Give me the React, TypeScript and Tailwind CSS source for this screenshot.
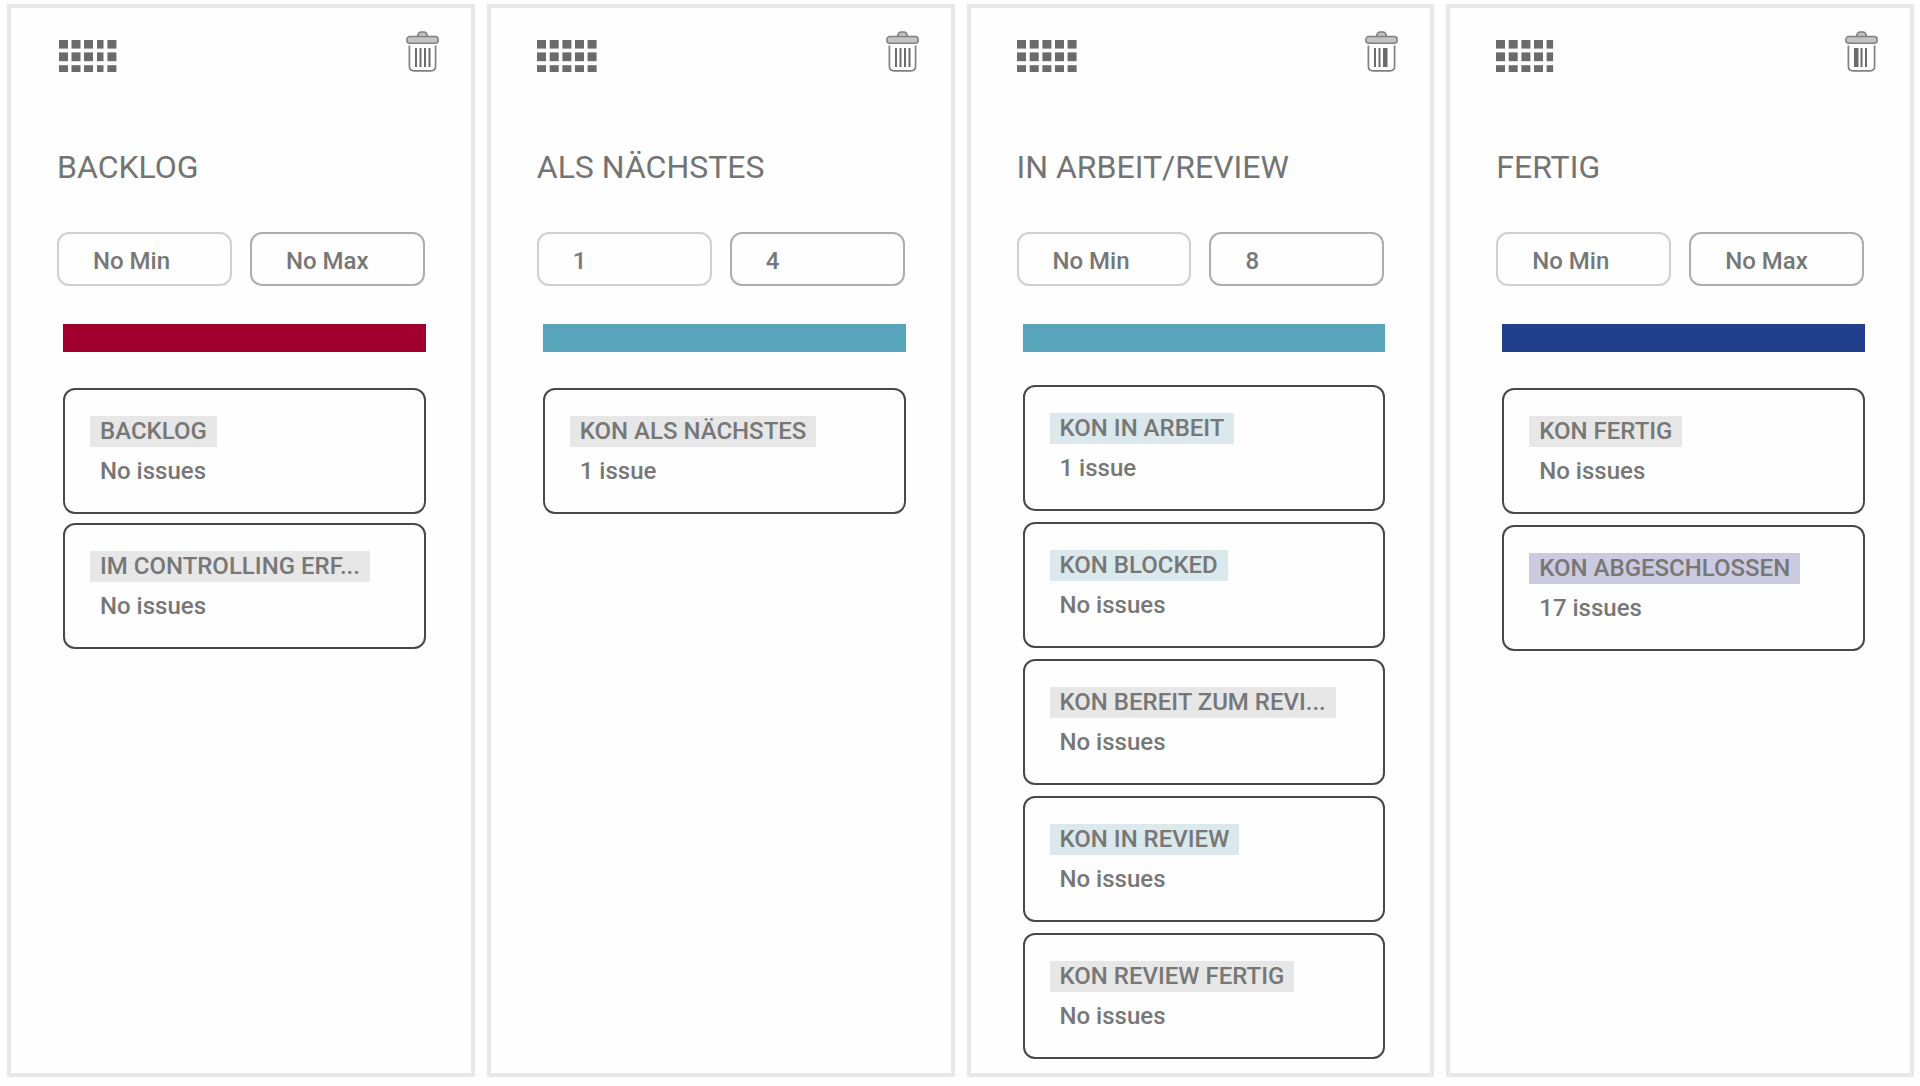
import React from "react";

type Tone = "gray" | "teal" | "violet";
type Status = { name: string; issues: string; tone: Tone };
type Column = {
  title: string;
  min: string;
  max: string;
  bar: string;
  grid: [number, number][];
  slats: [number, number][];
  list: string;
  statuses: Status[];
};

const wideGrid: [number, number][] = [[0, 9], [12.7, 9], [25.4, 9], [38, 9], [50.6, 9]];
const evenSlats: [number, number][] = [[9, 2], [13.5, 2], [18, 2], [22.5, 2]];

const columns: Column[] = [
  {
    title: "BACKLOG",
    min: "No Min",
    max: "No Max",
    bar: "bg-[#a1002e]",
    grid: [[2, 9], [14.5, 9], [27, 9], [40, 6.5], [50.4, 9]],
    slats: evenSlats,
    list: "mt-9 gap-[9px]",
    statuses: [
      { name: "BACKLOG", issues: "No issues", tone: "gray" },
      { name: "IM CONTROLLING ERF...", issues: "No issues", tone: "gray" },
    ],
  },
  {
    title: "ALS NÄCHSTES",
    min: "1",
    max: "4",
    bar: "bg-[#58a4bb]",
    grid: wideGrid,
    slats: evenSlats,
    list: "mt-9 gap-[9px]",
    statuses: [{ name: "KON ALS NÄCHSTES", issues: "1 issue", tone: "gray" }],
  },
  {
    title: "IN ARBEIT/REVIEW",
    min: "No Min",
    max: "8",
    bar: "bg-[#58a4bb]",
    grid: wideGrid,
    slats: [[9, 2], [13.5, 2], [18, 4.5]],
    list: "mt-[33px] gap-[11px]",
    statuses: [
      { name: "KON IN ARBEIT", issues: "1 issue", tone: "teal" },
      { name: "KON BLOCKED", issues: "No issues", tone: "teal" },
      { name: "KON BEREIT ZUM REVI...", issues: "No issues", tone: "gray" },
      { name: "KON IN REVIEW", issues: "No issues", tone: "teal" },
      { name: "KON REVIEW FERTIG", issues: "No issues", tone: "gray" },
    ],
  },
  {
    title: "FERTIG",
    min: "No Min",
    max: "No Max",
    bar: "bg-[#223f8c]",
    grid: [[0, 9], [12.7, 9], [25.4, 9], [38, 9], [50.6, 6.5]],
    slats: [[9, 4.5], [15.5, 2], [20, 2]],
    list: "mt-9 gap-[11px]",
    statuses: [
      { name: "KON FERTIG", issues: "No issues", tone: "gray" },
      { name: "KON ABGESCHLOSSEN", issues: "17 issues", tone: "violet" },
    ],
  },
];

const tones: Record<Tone, string> = {
  gray: "bg-[#e7e7e7]",
  teal: "bg-[#dbe8ec]",
  violet: "bg-[#cbcae0]",
};

function GripIcon({ cells }: { cells: [number, number][] }) {
  return (
    <svg width="60" height="32" viewBox="0 0 60 32" fill="#6b6b6b" aria-hidden="true">
      {cells.map(([x, w]) => (
        <g key={x}>
          <rect x={x} y="0" width={w} height="8.6" />
          <rect x={x} y="12.4" width={w} height="8.8" />
          <rect x={x} y="25.2" width={w} height="6.8" />
        </g>
      ))}
    </svg>
  );
}

function TrashIcon({ slats }: { slats: [number, number][] }) {
  return (
    <svg width="33" height="41" viewBox="0 0 33 41" fill="none" stroke="#808080" aria-hidden="true">
      <path d="M11.6 5.5V4.8Q12.6 1 15 1H18Q20.4 1 21.4 4.8V5.5" strokeWidth="1.6" fill="#c4c4c4" />
      <rect x="0.8" y="5.6" width="31.4" height="6.6" rx="3" strokeWidth="1.5" fill="#c4c4c4" />
      <path d="M3.4 14.5V35.2Q3.4 39.8 8 39.8H25Q29.6 39.8 29.6 35.2V14.5" strokeWidth="1.7" />
      {slats.map(([x, w]) => (
        <rect key={x} x={x} y="17" width={w} height="19" fill="#6b6b6b" stroke="none" />
      ))}
    </svg>
  );
}

const fieldClass =
  "h-[54px] w-full min-w-0 rounded-xl border-2 bg-transparent pt-1 pl-[34px] pr-3 text-2xl font-medium text-[#777777]";

function BoardColumn({ column }: { column: Column }) {
  return (
    <section className="min-w-0 flex-1 border-4 border-[#e8e8e8] pt-[23px] pb-3" aria-label={column.title}>
      <header className="flex items-start justify-between pr-8 pl-[46px]">
        <button type="button" aria-label="Move column" className="mt-[9px] cursor-grab">
          <GripIcon cells={column.grid} />
        </button>
        <button type="button" aria-label="Delete column">
          <TrashIcon slats={column.slats} />
        </button>
      </header>
      <h2 className="mt-[75px] pl-[46px] text-[32px] leading-10 text-[#747474]">{column.title}</h2>
      <div className="mt-[45px] flex gap-[18px] px-[46px]">
        <input aria-label="Minimum" defaultValue={column.min} className={`${fieldClass} border-[#d0d0d0]`} />
        <input aria-label="Maximum" defaultValue={column.max} className={`${fieldClass} border-[#adadad]`} />
      </div>
      <div className="pr-[45px] pl-[52px]">
        <div className={`mt-[38px] h-7 ${column.bar}`} />
        <ul className={`flex flex-col ${column.list}`}>
          {column.statuses.map((status) => (
            <li key={status.name} className="rounded-xl border-2 border-[#484848] pt-[26px] pb-[25px] pl-[25px]">
              <span className={`block w-fit px-2.5 text-2xl leading-[31px] font-medium whitespace-nowrap text-[#777777] ${tones[status.tone]}`}>
                {status.name}
              </span>
              <p className="mt-2 pl-2.5 text-2xl leading-8 font-medium text-[#777777]">{status.issues}</p>
            </li>
          ))}
        </ul>
      </div>
    </section>
  );
}

export default function App() {
  return (
    <main className="flex min-h-screen gap-3 bg-[#fefefe] pt-1 pr-1.5 pb-[9px] pl-[7px] font-['Roboto',sans-serif]">
      {columns.map((column) => (
        <BoardColumn key={column.title} column={column} />
      ))}
    </main>
  );
}
